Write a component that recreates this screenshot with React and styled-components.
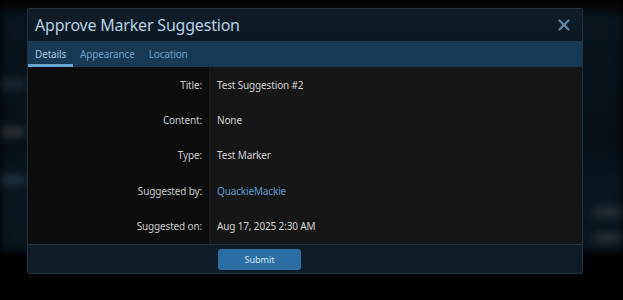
import React from "react";
import styled, { createGlobalStyle } from "styled-components";

const GlobalStyle = createGlobalStyle`
  html, body {
    margin: 0;
    padding: 0;
    background: #000;
  }
  body {
    font-family: "Noto Sans", "Open Sans", Arial, sans-serif;
  }
`;

const Screen = styled.div`
  position: relative;
  width: 623px;
  height: 300px;
  overflow: hidden;
  background: #000;
`;

// blurred page behind the dialog
const Backdrop = styled.div`
  display: flex;
  flex-direction: column;
  height: 100%;
  filter: blur(5px);
  opacity: 0.85;
`;

const BackTop = styled.div`
  height: 12px;
  background: #05080b;
`;

const BackPage = styled.div`
  display: flex;
  justify-content: space-between;
  height: 240px;
  background: linear-gradient(180deg, #0b1923 0%, #08121a 55%, #0a1a25 70%, #0a1822 100%);
`;

const BackSide = styled.div`
  display: flex;
  flex-direction: column;
  gap: ${(p) => p.gap}px;
  width: 40px;
  padding-top: ${(p) => p.top}px;
  align-items: ${(p) => (p.right ? "flex-end" : "flex-start")};
`;

const BackStripe = styled.div`
  width: ${(p) => p.w}px;
  height: 8px;
  border-radius: 4px;
  background: ${(p) => p.color};
`;

const Overlay = styled.div`
  position: absolute;
  left: 27px;
  top: 8px;
`;

const Dialog = styled.div`
  display: flex;
  flex-direction: column;
  width: 556px;
  height: 266px;
  box-sizing: border-box;
  border: 1px solid #24323d;
  border-radius: 2px;
  overflow: hidden;
  background: #141414;
`;

const Header = styled.div`
  display: flex;
  align-items: center;
  justify-content: space-between;
  height: 32px;
  padding: 0 10px 0 7px;
  background: linear-gradient(180deg, #0f1e29 0%, #0b1822 100%);
`;

const Title = styled.h1`
  margin: 0;
  font-size: 16px;
  font-weight: 400;
  color: #b6d0e4;
  letter-spacing: -0.2px;
`;

const CloseButton = styled.button`
  display: flex;
  align-items: center;
  justify-content: center;
  width: 16px;
  height: 16px;
  padding: 0;
  border: none;
  background: none;
  cursor: pointer;
`;

const Tabs = styled.div`
  display: flex;
  height: 26px;
  background: #173953;
`;

const Tab = styled.div`
  display: flex;
  align-items: center;
  padding: 0 7px;
  font-size: 10px;
  letter-spacing: -0.15px;
  color: ${(p) => (p.active ? "#a8c7de" : "#6c9fc7")};
  box-shadow: ${(p) => (p.active ? "inset 0 -3px 0 #69a6d6" : "none")};
`;

const Details = styled.div`
  display: grid;
  grid-template-columns: 182px 1fr;
  grid-auto-rows: 1fr;
  flex: 1;
`;

const Label = styled.div`
  display: flex;
  align-items: center;
  justify-content: flex-end;
  padding-right: 7px;
  font-size: 10px;
  letter-spacing: -0.15px;
  color: #c9c9c9;
  background: #0c0c0c;
  border-right: 1px solid #1c1c1c;
`;

const Value = styled.div`
  display: flex;
  align-items: center;
  padding-left: 7px;
  font-size: 10px;
  letter-spacing: -0.15px;
  color: ${(p) => (p.link ? "#5b9ccf" : "#d2d2d2")};
  background: #161616;
`;

const Footer = styled.div`
  display: flex;
  align-items: center;
  height: 28px;
  padding-left: 190px;
  border-top: 1px solid #27323b;
  background: #0e1c27;
`;

const SubmitButton = styled.button`
  width: 83px;
  height: 21px;
  border: none;
  border-radius: 3px;
  background: #2a6ea3;
  color: #dbe9f4;
  font-family: inherit;
  font-size: 9px;
  cursor: pointer;
`;

const rows = [
  { label: "Title:", value: "Test Suggestion #2" },
  { label: "Content:", value: "None" },
  { label: "Type:", value: "Test Marker" },
  { label: "Suggested by:", value: "QuackieMackie", link: true },
  { label: "Suggested on:", value: "Aug 17, 2025 2:30 AM" },
];

const App = () => {
  return (
    <Screen>
      <GlobalStyle />
      <Backdrop>
        <BackTop />
        <BackPage>
          <BackSide gap={40} top={68}>
            <BackStripe w={26} color="#2a3a46" />
            <BackStripe w={26} color="#45494c" />
            <BackStripe w={26} color="#2e4456" />
          </BackSide>
          <BackSide right gap={18} top={196}>
            <BackStripe w={30} color="#3a3f44" />
            <BackStripe w={30} color="#3a3f44" />
          </BackSide>
        </BackPage>
      </Backdrop>

      <Overlay>
        <Dialog>
          <Header>
            <Title>Approve Marker Suggestion</Title>
            <CloseButton aria-label="Close">
              <svg width="12" height="12" viewBox="0 0 12 12">
                <path
                  d="M1.5 1.5 L10.5 10.5 M10.5 1.5 L1.5 10.5"
                  stroke="#5f88a8"
                  strokeWidth="2.2"
                  strokeLinecap="round"
                />
              </svg>
            </CloseButton>
          </Header>
          <Tabs>
            <Tab active>Details</Tab>
            <Tab>Appearance</Tab>
            <Tab>Location</Tab>
          </Tabs>
          <Details>
            {rows.map((row) => (
              <React.Fragment key={row.label}>
                <Label>{row.label}</Label>
                <Value link={row.link}>{row.value}</Value>
              </React.Fragment>
            ))}
          </Details>
          <Footer>
            <SubmitButton>Submit</SubmitButton>
          </Footer>
        </Dialog>
      </Overlay>
    </Screen>
  );
};

export default App;
